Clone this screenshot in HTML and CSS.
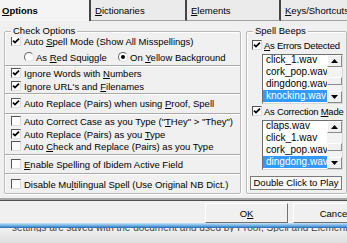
FILE: index.html
```html
<!DOCTYPE html>
<html lang="en">
<head>
    <meta charset="UTF-8">
    <meta name="viewport" content="width=device-width, initial-scale=1.0">
    <title>Options</title>
    <link rel="stylesheet" href="styles.css">
</head>
<body>
    <div class="tabs">
        <div class="tab active"><u>O</u>ptions</div>
        <div class="tab"><u>D</u>ictionaries</div>
        <div class="tab narrow"><u>E</u>lements</div>
        <div class="tab last"><u>K</u>eys/Shortcuts</div>
    </div>

    <div class="panel">
        <!-- Check Options -->
        <div class="group check-options">
            <span class="legend">Check Options</span>
            <div class="row r1"><span class="cb"><svg viewBox="0 0 8 8"><path d="M1 3.6 L3 5.6 L7 1.6"/></svg></span><span>Auto <u>S</u>pell Mode (Show All Misspellings)</span></div>
            <div class="row radios r2">
                <span class="radio-item first"><span class="rb"></span><span>As <u>R</u>ed Squiggle</span></span>
                <span class="radio-item"><span class="rb on"></span><span>On <u>Y</u>ellow Background</span></span>
            </div>
            <div class="sep s1"></div>
            <div class="row"><span class="cb"><svg viewBox="0 0 8 8"><path d="M1 3.6 L3 5.6 L7 1.6"/></svg></span><span>Ignore Words with <u>N</u>umbers</span></div>
            <div class="row r4"><span class="cb"><svg viewBox="0 0 8 8"><path d="M1 3.6 L3 5.6 L7 1.6"/></svg></span><span>Ignore URL's and <u>F</u>ilenames</span></div>
            <div class="sep s2"></div>
            <div class="row r5"><span class="cb"><svg viewBox="0 0 8 8"><path d="M1 3.6 L3 5.6 L7 1.6"/></svg></span><span>Auto Replace (Pairs) when using <u>P</u>roof, Spell</span></div>
            <div class="sep s3"></div>
            <div class="row"><span class="cb"></span><span>Auto Correct Case as you Type ("<u>T</u>Hey" &gt; "They")</span></div>
            <div class="row r7"><span class="cb"><svg viewBox="0 0 8 8"><path d="M1 3.6 L3 5.6 L7 1.6"/></svg></span><span>Auto Replace (Pairs) as you <u>T</u>ype</span></div>
            <div class="row"><span class="cb"></span><span>Auto <u>C</u>heck and Replace (Pairs) as you Type</span></div>
            <div class="sep s4"></div>
            <div class="row r9"><span class="cb"></span><span><u>E</u>nable Spelling of Ibidem Active Field</span></div>
            <div class="sep s5"></div>
            <div class="row r10"><span class="cb"></span><span>Disable Mu<u>l</u>tilingual Spell (Use Original NB Dict.)</span></div>
        </div>

        <!-- Spell Beeps -->
        <div class="group spell-beeps">
            <span class="legend">Spell Beeps</span>
            <div class="row b1"><span class="cb"><svg viewBox="0 0 8 8"><path d="M1 3.6 L3 5.6 L7 1.6"/></svg></span><span class="tight"><u>A</u>s Errors Detected</span></div>
            <div class="listbox">
                <div class="items">
                    <div class="item top">click_1.wav</div>
                    <div class="item">cork_pop.wav</div>
                    <div class="item">dingdong.wav</div>
                    <div class="item selected">knocking.wav</div>
                </div>
                <div class="scrollbar">
                    <div class="sb-btn"><svg viewBox="0 0 7 4"><path d="M0 4 L3.5 0 L7 4Z"/></svg></div>
                    <div class="sb-track"><div class="sb-thumb"></div></div>
                    <div class="sb-btn"><svg viewBox="0 0 7 4"><path d="M0 0 L7 0 L3.5 4Z"/></svg></div>
                </div>
            </div>
            <div class="row b2"><span class="cb"><svg viewBox="0 0 8 8"><path d="M1 3.6 L3 5.6 L7 1.6"/></svg></span><span class="tight">As Correction <u>M</u>ade</span></div>
            <div class="listbox second">
                <div class="items">
                    <div class="item top">claps.wav</div>
                    <div class="item">click_1.wav</div>
                    <div class="item">cork_pop.wav</div>
                    <div class="item selected">dingdong.wav</div>
                </div>
                <div class="scrollbar">
                    <div class="sb-btn"><svg viewBox="0 0 7 4"><path d="M0 4 L3.5 0 L7 4Z"/></svg></div>
                    <div class="sb-track"><div class="sb-thumb"></div></div>
                    <div class="sb-btn"><svg viewBox="0 0 7 4"><path d="M0 0 L7 0 L3.5 4Z"/></svg></div>
                </div>
            </div>
            <button class="play" type="button">Double Click to Play</button>
        </div>
    </div>

    <div class="buttons">
        <button class="btn" type="button">O<u>K</u></button>
        <button class="btn" type="button">Cancel</button>
    </div>

    <div class="taskbar"></div>
    <div class="behind"><div class="behind-text">settings are saved with the document and used by Proof, Spell and Elements while typing</div></div>
</body>
</html>
```

FILE: styles.css
```css
* {
    box-sizing: border-box;
}
html, body {
    margin: 0;
    padding: 0;
}
body {
    width: 347px;
    height: 243px;
    overflow: hidden;
    background-color: #f0f0f0;
    font-family: "Liberation Sans", Arial, sans-serif;
    font-size: 9.5px;
    color: #000;
}
u {
    text-decoration: underline;
    text-underline-offset: 1px;
}

/* tabs */
.tabs {
    display: flex;
    height: 21px;
}
.tab {
    width: 96px;
    height: 21px;
    padding-left: 4px;
    line-height: 21px;
    white-space: nowrap;
    overflow: hidden;
    background-color: #ebebeb;
    border-right: 2px solid #444;
    border-bottom: 1px solid #a0a0a0;
}
.tab.active {
    width: 91px;
    padding-left: 2px;
    font-weight: bold;
    background-color: #f4f4f4;
    border-bottom: none;
}
.tab.narrow {
    width: 94px;
}
.tab.last {
    flex: 1;
    border-right: none;
}

/* main panel */
.panel {
    display: flex;
    gap: 5px;
    height: 180px;
    padding: 10px 0 0 4px;
    border-bottom: 1px solid #4e4e4e;
    box-shadow: inset 0 -2px 0 #a6a6a6;
}
.group {
    position: relative;
    height: 163px;
    border: 1px solid #b9b9b9;
    border-radius: 2px;
    box-shadow: inset 1px 1px 0 #fff, 1px 1px 0 #fff;
}
.legend {
    position: absolute;
    top: -7px;
    left: 6px;
    padding: 0 2px;
    line-height: 12px;
    background-color: #f0f0f0;
}
.check-options {
    width: 237px;
}
.spell-beeps {
    width: 101px;
    padding-left: 5px;
}

.row {
    display: flex;
    align-items: center;
    height: 12px;
    padding-left: 6px;
    white-space: nowrap;
}
.r1 { margin-top: 3px; }
.r2 { margin-top: 4px; }
.r4 { margin-top: 1px; }
.r5 { margin-top: 2px; }
.r7 { margin-top: 1px; }
.r9 { margin-top: 2px; }
.r10 { margin-top: 3px; }

.sep {
    height: 2px;
    border-top: 1px solid #a9a9a9;
    border-bottom: 1px solid #fff;
}
.s1 { margin-top: 2px; }
.s2 { margin-top: 1px; }
.s3 { margin-top: 4px; }
.s4 { margin-top: 2px; }
.s5 { margin-top: 3px; }

/* checkbox and radio */
.cb {
    display: flex;
    align-items: center;
    justify-content: center;
    flex: none;
    width: 10px;
    height: 10px;
    margin-right: 3px;
    background-color: #fff;
    border: 1px solid;
    border-color: #555 #dcdcdc #dcdcdc #555;
}
.cb svg {
    width: 8px;
    height: 8px;
    fill: none;
    stroke: #000;
    stroke-width: 1.8;
}
.radios {
    padding-left: 19px;
}
.radio-item {
    display: flex;
    align-items: center;
}
.radio-item.first {
    width: 94px;
}
.rb {
    display: flex;
    align-items: center;
    justify-content: center;
    flex: none;
    width: 10px;
    height: 10px;
    margin-right: 2px;
    border-radius: 50%;
    background-color: #fff;
    border: 1px solid;
    border-color: #666 #dcdcdc #dcdcdc #666;
}
.rb.on::after {
    content: "";
    width: 4px;
    height: 4px;
    border-radius: 50%;
    background-color: #000;
}

/* spell beeps */
.b1 {
    margin-top: 7px;
    padding-left: 0;
}
.b2 {
    margin-top: 1px;
    padding-left: 0;
}
.b1 .cb, .b2 .cb {
    margin-right: 2px;
}
.tight {
    letter-spacing: -0.25px;
}
.listbox {
    display: flex;
    width: 81px;
    height: 50px;
    margin: 3px 0 0 10px;
    background-color: #fff;
    border: 1px solid;
    border-color: #6e6e6e #d8d8d8 #d8d8d8 #6e6e6e;
    overflow: hidden;
}
.items {
    flex: 1;
    min-width: 0;
}
.item {
    height: 12px;
    padding-left: 3px;
    font-size: 10px;
    line-height: 12px;
    white-space: nowrap;
}
.item.top {
    margin-top: -1px;
}
.item.selected {
    background-color: #3399ff;
    color: #fff;
}
.scrollbar {
    display: flex;
    flex-direction: column;
    flex: none;
    width: 15px;
    background-color: #f3f3f3;
}
.sb-btn {
    display: flex;
    align-items: center;
    justify-content: center;
    height: 12px;
    background-color: #f0f0f0;
    border: 1px solid;
    border-color: #fff #8a8a8a #8a8a8a #fff;
}
.sb-btn svg {
    width: 7px;
    height: 4px;
    fill: #000;
}
.sb-track {
    flex: 1;
}
.sb-thumb {
    height: 8px;
    margin-top: 10px;
    background-color: #f0f0f0;
    border: 1px solid;
    border-color: #fff #8a8a8a #8a8a8a #fff;
}
.play {
    display: block;
    width: 92px;
    height: 14px;
    margin: 6px 0 0 -2px;
    padding: 0;
    font-family: inherit;
    font-size: 9.5px;
    line-height: 12px;
    color: #000;
    background-color: #f8f8f8;
    border: 1px solid #7a7a7a;
}

/* dialog buttons */
.buttons {
    display: flex;
    gap: 5px;
    height: 22px;
    padding: 2px 0 0 205px;
}
.btn {
    flex: none;
    width: 83px;
    height: 20px;
    padding: 0;
    font-family: inherit;
    font-size: 9.5px;
    color: #000;
    background-color: #f0f0f0;
    border: 1px solid;
    border-color: #fff #707070 #707070 #fff;
}

/* window edge and what lies behind */
.taskbar {
    height: 5px;
    background: linear-gradient(#cde5f8, #79b6e6 45%, #3f8bd0 80%, #2b609c);
}
.behind {
    height: 15px;
    background: linear-gradient(#f2f2f2, #dedede);
}
.behind-text {
    height: 4px;
    overflow: hidden;
    padding-left: 12px;
    line-height: 0;
    font-size: 10px;
    color: #444;
    white-space: nowrap;
}
```
